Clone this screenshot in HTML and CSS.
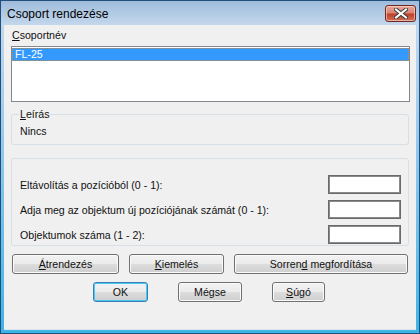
FILE: index.html
```html
<!DOCTYPE html>
<html lang="hu">
<head>
    <meta charset="UTF-8">
    <title>Csoport rendezése</title>
    <link rel="stylesheet" href="styles.css">
</head>
<body>
    <div class="window">
        <div class="titlebar">
            <span class="title">Csoport rendezése</span>
            <button class="close" type="button">
                <svg width="14" height="11" viewBox="0 0 14 11">
                    <path d="M2 1.5 L12 9.5 M12 1.5 L2 9.5" stroke="#3a3a3a" stroke-width="4" stroke-linecap="square"/>
                    <path d="M2 1.5 L12 9.5 M12 1.5 L2 9.5" stroke="#ffffff" stroke-width="2" stroke-linecap="square"/>
                </svg>
            </button>
        </div>
        <div class="client">
            <div class="field-label"><u>C</u>soportnév</div>
            <div class="listbox">
                <div class="item selected">FL-25</div>
            </div>

            <fieldset class="group desc">
                <legend><u>L</u>eírás</legend>
                <div class="desc-text">Nincs</div>
            </fieldset>

            <fieldset class="group params">
                <div class="row">
                    <label>Eltávolítás a pozícióból (0 - 1):</label>
                    <input type="text">
                </div>
                <div class="row">
                    <label>Adja meg az objektum új pozíciójának számát (0 - 1):</label>
                    <input type="text">
                </div>
                <div class="row">
                    <label>Objektumok száma (1 - 2):</label>
                    <input type="text">
                </div>
            </fieldset>

            <div class="actions">
                <button class="btn w-rearrange" type="button"><u>Á</u>trendezés</button>
                <button class="btn w-highlight" type="button"><u>K</u>iemelés</button>
                <button class="btn w-reverse" type="button">Sorren<u>d</u> megfordítása</button>
            </div>

            <div class="dialog-buttons">
                <button class="btn default w-ok" type="button">OK</button>
                <button class="btn w-cancel" type="button">Mégse</button>
                <button class="btn w-help" type="button"><u>S</u>úgó</button>
            </div>
        </div>
    </div>
</body>
</html>
```

FILE: styles.css
```css
html, body {
    margin: 0;
    padding: 0;
}
body {
    font-family: "Liberation Sans", Arial, sans-serif;
    font-size: 10.6px;
    color: #111;
    background: #fff;
}
.window {
    width: 420px;
    height: 334px;
    box-sizing: border-box;
    border: 1px solid #1f4f7c;
    background: linear-gradient(to bottom, #a0bcdb 0, #c3d7ec 24px, #9fcbed 120px, #3cb4e6 100%);
    display: flex;
    flex-direction: column;
}
.titlebar {
    height: 24px;
    display: flex;
    justify-content: space-between;
    align-items: flex-start;
    flex: none;
}
.title {
    font-family: "Liberation Sans", Arial, sans-serif;
    font-size: 12px;
    line-height: 16px;
    padding: 5px 0 0 6px;
    color: #000;
}
.close {
    width: 31px;
    height: 17px;
    margin: 4px 3px 0 0;
    padding: 0;
    border: 1px solid #6b2a22;
    border-radius: 3px;
    background: linear-gradient(to bottom, #e9a99b 0%, #d88470 45%, #c0412b 55%, #d0705a 100%);
    box-shadow: inset 0 0 0 1px rgba(255, 220, 210, 0.6);
    display: flex;
    align-items: center;
    justify-content: center;
}
.client {
    flex: 1;
    margin: 0 3px 3px 3px;
    background: #f0f0f0;
    box-shadow: inset 0 -1px 0 #dfe6ee;
    padding: 4px 7px 0 7px;
}
.field-label {
    line-height: 13px;
    padding-left: 1px;
    margin-bottom: 4px;
}
.listbox {
    width: 399px;
    height: 56px;
    box-sizing: border-box;
    border: 1px solid #828790;
    background: #fff;
    padding-top: 1px;
}
.item {
    height: 13px;
    line-height: 13px;
    padding-left: 3px;
}
.item.selected {
    background: #3399ff;
    color: #fff;
    outline: 1px dotted #c88a3c;
    outline-offset: -1px;
}
.group {
    margin: 0;
    border: 1px solid #d5dfe5;
    border-radius: 3px;
    min-width: 0;
}
.desc {
    margin-top: 6px;
    width: 398px;
    box-sizing: border-box;
    padding: 5px 7px 6px 7px;
}
.desc legend {
    padding: 0 1px;
    line-height: 12px;
}
.desc-text {
    line-height: 13px;
    padding-left: 1px;
}
.params {
    margin-top: 13px;
    width: 398px;
    box-sizing: border-box;
    padding: 16px 7px 1px 8px;
    display: flex;
    flex-direction: column;
    gap: 6px;
}
.row {
    display: flex;
    justify-content: space-between;
    align-items: center;
    height: 19px;
}
.row label {
    padding-top: 1px;
}
.row input {
    width: 73px;
    height: 19px;
    box-sizing: border-box;
    border: 1px solid #6a6a6a;
    box-shadow: inset 0 0 0 1px #8a8a8a;
    background: #fff;
    padding: 0 2px;
    margin: 0;
    font: inherit;
    outline: none;
}
.actions {
    display: flex;
    gap: 10px;
    margin-top: 8px;
    padding-left: 1px;
}
.dialog-buttons {
    display: flex;
    justify-content: center;
    gap: 30px;
    margin-top: 8px;
    padding-right: 2px;
}
.btn {
    height: 20px;
    box-sizing: border-box;
    border: 1px solid #707070;
    border-radius: 3px;
    background: linear-gradient(to bottom, #f2f2f2 0%, #ebebeb 50%, #dddddd 50%, #cfcfcf 100%);
    box-shadow: inset 0 0 0 1px #fbfbfb;
    font-family: "Liberation Sans", Arial, sans-serif;
    font-size: 10.6px;
    color: #111;
    padding: 0;
    line-height: 17px;
}
.btn.default {
    border-color: #3c7fb1;
    box-shadow: inset 0 0 0 1px #48c8f6;
}
.w-rearrange { width: 107px; }
.w-highlight { width: 95px; }
.w-reverse { width: 174px; }
.w-ok { width: 55px; }
.w-cancel { width: 64px; }
.w-help { width: 53px; }
```
